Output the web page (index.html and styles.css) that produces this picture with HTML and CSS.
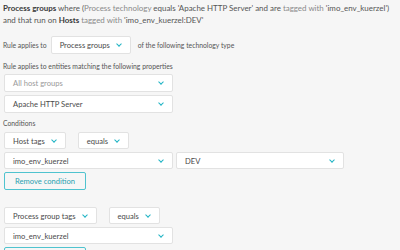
FILE: index.html
```html
<!DOCTYPE html>
<html>
<head>
<meta charset="utf-8">
<link rel="stylesheet" href="styles.css">
</head>
<body>
<div class="page">
  <p class="summary"><b>Process groups</b> where (<span class="lt">Process technology</span> equals 'Apache HTTP Server' and are <span class="lt">tagged with</span> 'imo_env_kuerzel')<br>and that run on <b>Hosts</b> <span class="lt">tagged with</span> 'imo_env_kuerzel:DEV'</p>

  <div class="applies">
    <span class="small">Rule applies to</span>
    <div class="select compact"><span>Process groups</span><i class="chev"></i></div>
    <span class="small">of the following technology type</span>
  </div>

  <div class="small label">Rule applies to entities matching the following properties</div>
  <div class="select wide placeholder"><span>All host groups</span><i class="chev"></i></div>
  <div class="select wide second"><span>Apache HTTP Server</span><i class="chev"></i></div>

  <div class="small label cond">Conditions</div>

  <div class="condition">
    <div class="row">
      <div class="select compact short"><span>Host tags</span><i class="chev"></i></div>
      <div class="select compact short op"><span>equals</span><i class="chev"></i></div>
    </div>
    <div class="row">
      <div class="select wide short"><span>imo_env_kuerzel</span><i class="chev"></i></div>
      <div class="select value short"><span>DEV</span><i class="chev"></i></div>
    </div>
    <button class="remove">Remove condition</button>
  </div>

  <div class="condition next">
    <div class="row">
      <div class="select compact short"><span>Process group tags</span><i class="chev"></i></div>
      <div class="select compact short op"><span>equals</span><i class="chev"></i></div>
    </div>
    <div class="row">
      <div class="select wide short"><span>imo_env_kuerzel</span><i class="chev"></i></div>
    </div>
    <button class="remove">Remove condition</button>
  </div>
</div>
</body>
</html>
```
FILE: styles.css
```css
html, body {
  margin: 0;
  padding: 0;
  background: #f6f6f6;
  overflow: hidden;
}
body {
  font-family: Lato, "Open Sans", sans-serif;
  color: #555;
  width: 400px;
  height: 250px;
}
.page {
  padding: 2px 4px 0 4px;
}
.summary {
  margin: 0 0 0 -1px;
  font-size: 7.95px;
  line-height: 12px;
  color: #555;
  white-space: nowrap;
}
.summary b {
  color: #3a3a3a;
  font-weight: 700;
}
.summary .lt {
  color: #8a8a8a;
}
.applies {
  display: flex;
  align-items: center;
  margin-top: 10px;
  height: 18px;
}
.applies .select {
  margin: 0 7px 0 4px;
  width: 80px;
}
.small {
  font-size: 6.8px;
  color: #555;
}
.applies .small:first-child {
  margin-left: -1px;
}
.label {
  margin: 6px 0 0 -1px;
  height: 12px;
  line-height: 12px;
}
.select {
  display: flex;
  align-items: center;
  background: #fff;
  border: 1px solid #e2e2e2;
  border-radius: 2px;
  box-sizing: border-box;
  height: 18px;
  padding: 0 7px 0 8px;
  font-size: 7.6px;
  color: #4a4a4a;
  white-space: nowrap;
}
.select span {
  flex: 1;
}
.compact span {
  flex: none;
  margin-right: 7px;
}
.applies .compact span {
  flex: 1;
  margin-right: 0;
}
.wide {
  width: 169px;
  margin-top: 2px;
}
.wide.second {
  margin-top: 3px;
}
.placeholder {
  color: #9a9a9a;
}
.chev {
  display: block;
  width: 3px;
  height: 3px;
  border-right: 1.3px solid #1fb3c4;
  border-bottom: 1.3px solid #1fb3c4;
  transform: rotate(45deg);
  margin-top: -2px;
  margin-right: 2px;
}
.cond {
  margin-top: 4px;
}
.condition {
  margin-top: 3px;
}
.condition.next {
  margin-top: 17px;
}
.row {
  display: flex;
  gap: 3px;
  margin-bottom: 3px;
}
.row .wide {
  margin-top: 0;
}
.short {
  height: 17px;
}
.op {
  margin-left: 9px;
}
.value {
  width: 168px;
}
.remove {
  display: block;
  margin: 0;
  height: 18px;
  width: 82px;
  box-sizing: border-box;
  background: transparent;
  border: 1px solid #4fc3cf;
  border-radius: 2px;
  font-family: Lato, "Open Sans", sans-serif;
  font-size: 7.6px;
  color: #2a9fb0;
  padding: 0;
}
```
